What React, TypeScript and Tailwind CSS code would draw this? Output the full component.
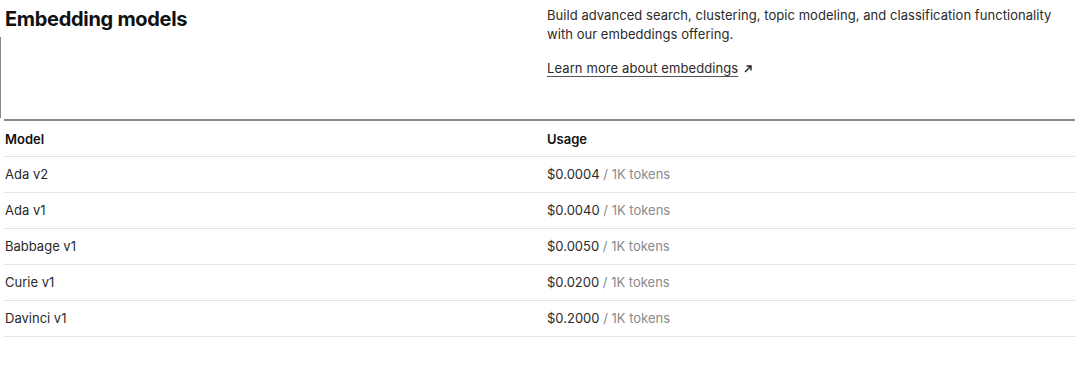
import React from "react";

const rows = [
  ["Ada v2", "$0.0004"],
  ["Ada v1", "$0.0040"],
  ["Babbage v1", "$0.0050"],
  ["Curie v1", "$0.0200"],
  ["Davinci v1", "$0.2000"],
];

export default function App() {
  return (
    <div
      className="w-[1080px] h-[386px] bg-white text-[#202123]"
      style={{ fontFamily: "Inter, 'Noto Sans', sans-serif" }}
    >
      <div className="flex h-[119px]">
        <div className="w-[547px] flex flex-col">
          <h2 className="pl-[5px] pt-[7px] text-[20px] leading-[24px] font-bold tracking-[-0.3px] text-[#111]">
            Embedding models
          </h2>
          <div className="mt-[6px] h-[81px] w-px bg-[#888]" />
        </div>
        <div className="flex-1 pt-[6px] text-[13px] leading-[19px] tracking-[0.05px] text-[#2a2a2a]">
          <p className="pr-[20px]">
            Build advanced search, clustering, topic modeling, and classification functionality
            with our embeddings offering.
          </p>
          <a className="mt-[15px] inline-flex items-center gap-[5px] text-[#2a2a2a]">
            <span className="underline decoration-[#555] underline-offset-[3px] tracking-[0.1px]">
              Learn more about embeddings
            </span>
            <svg width="10" height="10" viewBox="0 0 10 10" fill="none" stroke="#222" strokeWidth="1.4">
              <path d="M2 8 L8 2 M3.5 2 H8 V6.5" />
            </svg>
          </a>
        </div>
      </div>
      <div className="ml-[4px] w-[1071px]">
        <div className="h-[2px] bg-[#8a8a8a]" />
        <div className="flex h-[36px] pt-[2px] items-center border-b border-[#e3e3e3] text-[13px] font-semibold text-[#111]">
          <div className="w-[543px] pl-[1px]">Model</div>
          <div className="flex-1">Usage</div>
        </div>
        {rows.map(([m, p]) => (
          <div
            key={m}
            className="flex h-[36px] pt-[1px] items-center border-b border-[#e3e3e3] text-[13px] text-[#2a2a2a]"
          >
            <div className="w-[543px] pl-[1px]">{m}</div>
            <div className="flex-1">
              {p} <span className="text-[#8a8a8a]">/ 1K tokens</span>
            </div>
          </div>
        ))}
      </div>
    </div>
  );
}
